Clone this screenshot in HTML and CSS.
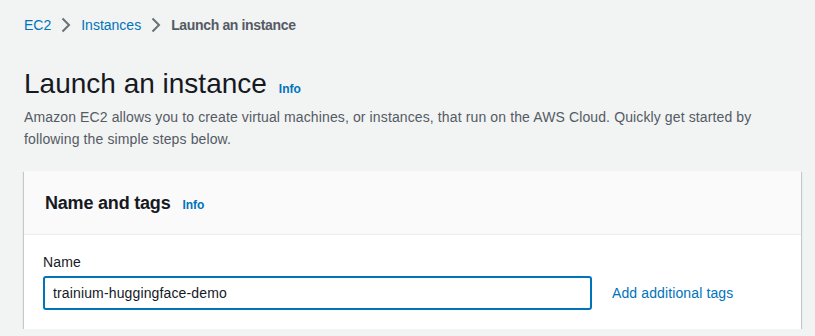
FILE: index.html
```html
<!DOCTYPE html>
<html lang="en">
<head>
<meta charset="utf-8">
<title>Launch an instance</title>
<link rel="stylesheet" href="styles.css">
</head>
<body>
<div class="page">
  <nav class="breadcrumbs">
    <a class="crumb-link" href="#">EC2</a>
    <svg class="chev" width="16" height="16" viewBox="0 0 16 16"><polyline points="4.5,1.5 11,8 4.5,14.5" fill="none" stroke="#687078" stroke-width="2" stroke-linejoin="miter"/></svg>
    <a class="crumb-link" href="#">Instances</a>
    <svg class="chev" width="16" height="16" viewBox="0 0 16 16"><polyline points="4.5,1.5 11,8 4.5,14.5" fill="none" stroke="#687078" stroke-width="2" stroke-linejoin="miter"/></svg>
    <span class="crumb-current">Launch an instance</span>
  </nav>

  <div class="page-head">
    <h1 class="title">Launch an instance</h1>
    <a class="info" href="#">Info</a>
  </div>
  <p class="desc">Amazon EC2 allows you to create virtual machines, or instances, that run on the AWS Cloud. Quickly get started by following the simple steps below.</p>

  <section class="container">
    <div class="container-header">
      <h2 class="section-title">Name and tags</h2>
      <a class="info info-sm" href="#">Info</a>
    </div>
    <div class="container-body">
      <label class="label" for="name">Name</label>
      <div class="field-row">
        <input id="name" class="input" type="text" value="trainium-huggingface-demo">
        <a class="link" href="#">Add additional tags</a>
      </div>
    </div>
  </section>
</div>
</body>
</html>
```
FILE: styles.css
```css
html, body {
  margin: 0;
  padding: 0;
  background: #f2f3f3;
}
body {
  font-family: "Liberation Sans", Arial, sans-serif;
  color: #16191f;
  font-size: 14px;
  line-height: 22px;
  letter-spacing: 0.12px;
}
.page {
  padding: 14px 13px 0 24px;
}
.breadcrumbs {
  display: flex;
  align-items: center;
  height: 22px;
}
.crumb-link {
  color: #0073bb;
  text-decoration: none;
  letter-spacing: 0;
}
.chev {
  margin: 0 7px;
  display: block;
}
.crumb-current {
  color: #545b64;
  font-weight: 700;
  letter-spacing: -0.35px;
}
.page-head {
  display: flex;
  align-items: baseline;
  margin-top: 30px;
}
.title {
  margin: 0;
  font-size: 28px;
  line-height: 36px;
  font-weight: 400;
  letter-spacing: 0;
  color: #16191f;
}
.info {
  color: #0073bb;
  font-size: 12px;
  line-height: 16px;
  font-weight: 700;
  letter-spacing: 0;
  text-decoration: none;
  margin-left: 12px;
}
.desc {
  margin: 4px 0 0;
  color: #545b64;
  width: 779px;
}
.container {
  margin-top: 21px;
  width: 777px;
  background: #fff;
  box-shadow: 0 1px 1px 0 rgba(0,28,36,0.3), 1px 1px 1px 0 rgba(0,28,36,0.15), -1px 1px 1px 0 rgba(0,28,36,0.15);
}
.container-header {
  display: flex;
  align-items: baseline;
  height: 22px;
  background: #fafafa;
  padding: 21px 20px 20px 21px;
  border-bottom: 1px solid #eaeded;
}
.section-title {
  margin: 0;
  font-size: 18px;
  line-height: 22px;
  font-weight: 700;
  letter-spacing: -0.2px;
  color: #16191f;
}
.info-sm {
  margin-left: 12px;
}
.container-body {
  padding: 16px 20px 19px 19px;
}
.label {
  display: block;
  color: #16191f;
  font-size: 14px;
  line-height: 22px;
}
.field-row {
  display: flex;
  align-items: center;
  margin-top: 3px;
}
.input {
  box-sizing: border-box;
  width: 549px;
  height: 34px;
  border: 2px solid #0073bb;
  border-radius: 3px;
  padding: 0 8px;
  font-family: "Liberation Sans", Arial, sans-serif;
  font-size: 14px;
  letter-spacing: 0.14px;
  color: #16191f;
  background: #fff;
  outline: none;
  margin: 0;
}
.link {
  margin-left: 20px;
  color: #0073bb;
  text-decoration: none;
}
```
